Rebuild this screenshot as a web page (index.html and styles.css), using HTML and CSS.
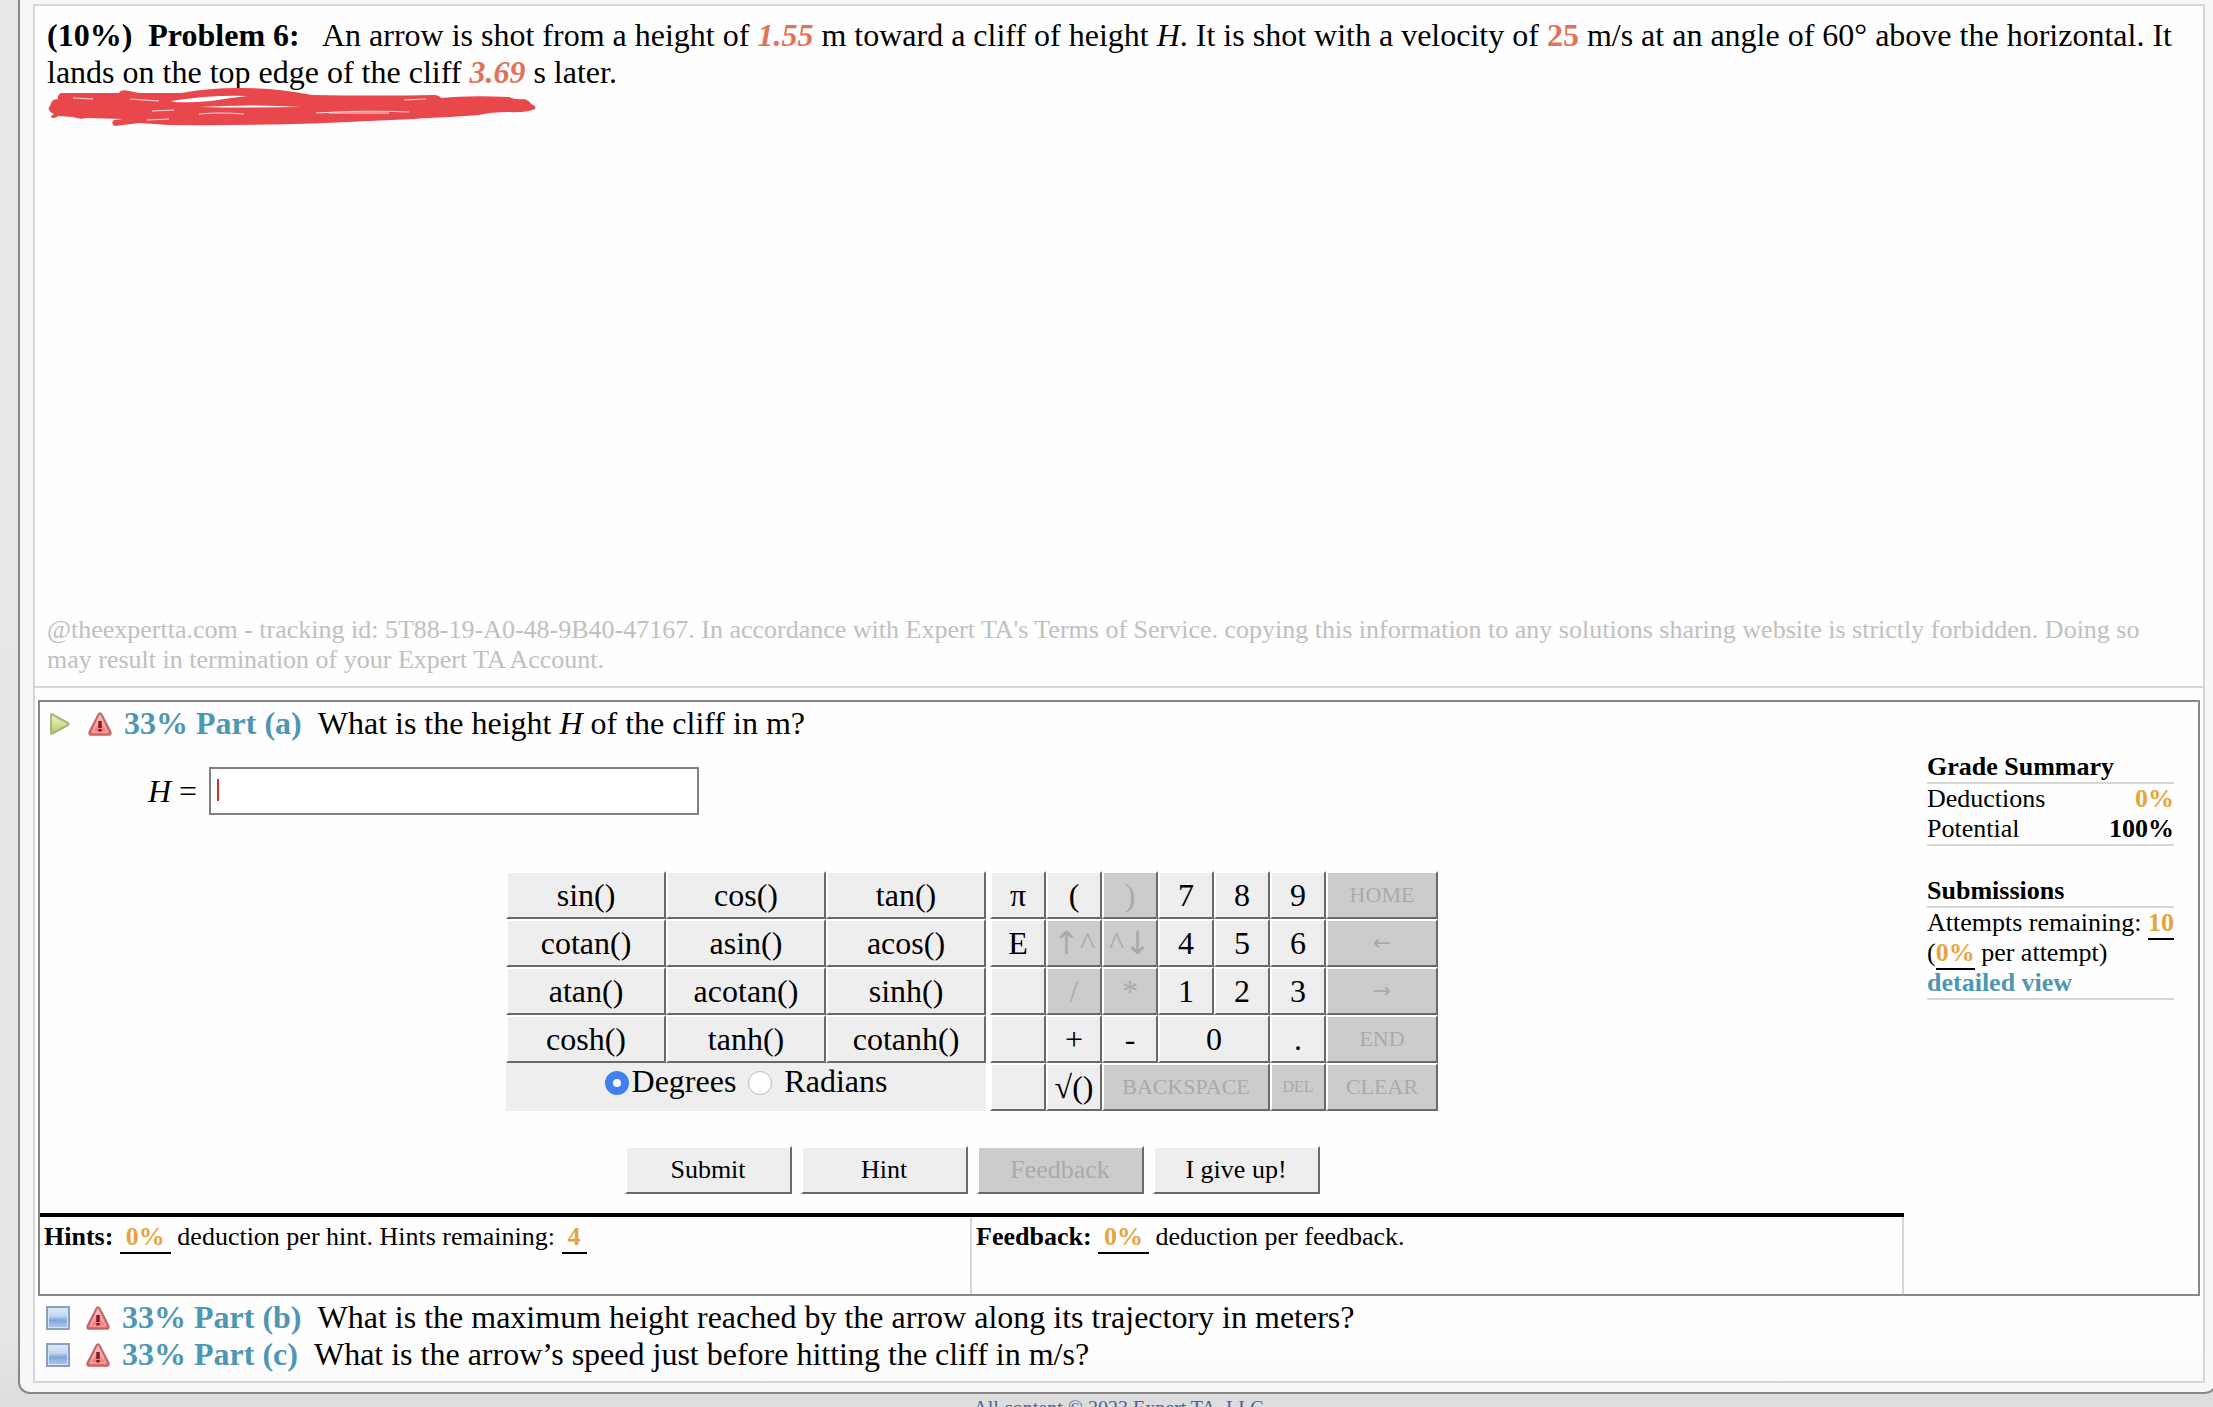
FILE: index.html
```html
<!DOCTYPE html>
<html lang="en">
  <head>
    <meta charset="UTF-8">
    <title>Problem 6</title>
    <link rel="stylesheet" href="styles.css">
  </head>
  <body>
    <!-- Shared icons -->
    <svg class="defs" width="0" height="0" aria-hidden="true">
      <defs>
        <linearGradient id="red" x1="0" y1="0" x2="0" y2="1">
          <stop offset="0" stop-color="#f6c4c4"/>
          <stop offset="1" stop-color="#f26a6a"/>
        </linearGradient>
        <linearGradient id="green" x1="0" y1="0" x2="0" y2="1">
          <stop offset="0" stop-color="#eef6cf"/>
          <stop offset="1" stop-color="#aed05a"/>
        </linearGradient>
        <linearGradient id="blue" x1="0" y1="0" x2="0" y2="1">
          <stop offset="0" stop-color="#dfeaf8"/>
          <stop offset="0.4" stop-color="#c4d8f0"/>
          <stop offset="0.6" stop-color="#7fa6dc"/>
          <stop offset="1" stop-color="#b4cff0"/>
        </linearGradient>
        <symbol id="warn" viewBox="0 0 24 24">
          <path d="M10.5 2.5 Q12 0 13.5 2.5 L22.5 20 Q23.3 22.8 21 22.8 L3 22.8 Q0.7 22.8 1.5 20 Z" fill="url(#red)" stroke="#c0656a" stroke-width="2" stroke-linejoin="round"/>
          <path d="M12 5 L4.5 20 L19.5 20 Z" fill="none" stroke="#f7b9b9" stroke-width="1"/>
          <path d="M10.3 9 H13.7 V16 H10.3 Z M10.3 17 H13.7 V19.5 H10.3 Z" fill="#7c1d22"/>
        </symbol>
        <symbol id="play" viewBox="0 0 24 24">
          <path d="M3 3 Q3 1.5 4.5 2.5 L20 11 Q21.5 12 20 13 L4.5 21.5 Q3 22.5 3 21 Z" fill="url(#green)" stroke="#a5b77c" stroke-width="2" stroke-linejoin="round"/>
        </symbol>
        <symbol id="square" viewBox="0 0 24 24">
          <rect x="1" y="1" width="22" height="22" fill="url(#blue)" stroke="#8b9fc0" stroke-width="2"/>
          <rect x="2.5" y="2.5" width="19" height="19" fill="none" stroke="#d5e3f5" stroke-width="1"/>
        </symbol>
      </defs>
    </svg>

    <div id="page">
      <div id="content">
        <!-- Section 1: Problem statement -->
        <div id="statement">
          <p class="problem"><b>(10%)&nbsp; Problem 6:</b> &nbsp; An arrow is shot from a height of <i class="value">1.55</i> m toward a cliff of height <i>H</i>. It is shot with a velocity of <b class="value">25</b> m/s at an angle of 60° above the horizontal. It lands on the top edge of the cliff <i class="value">3.69</i> s later.</p>
          <svg class="scribble" viewBox="0 0 510 60" aria-hidden="true">
            <path d="M22 17 L80 17 Q82 13 90 15 L100 17 L142 17 Q170 12 200 12 Q238 12 273 19 Q340 20 396 19 Q401 20 402 22 Q430 19 470 21 Q476 24 485 23 Q491 25 492 28 Q498 30 496 33 Q486 37 470 36 Q452 36 440 39 Q400 42 330 45 Q240 50 130 49 L100 47 L76 50 Q71 48 75 44 L84 43 L47 42 Q42 44 34 41 L20 40 Q12 44 12 40 L15 38 Q7 34 11 30 L13 25 Q15 23 19 23 Q18 19 22 17 Z" fill="#e8474b"/>
            <path d="M132 25 Q170 19 208 20 Q190 22 172 25 Q150 27 135 26 Z M160 31 Q210 28 262 31 Q215 32 160 31 Z" fill="#fff"/>
            <path d="M34 22 L54 23 M91 23 Q105 24 120 25 M113 35 L135 34 M160 38 Q180 36 205 38 M277 37 Q330 34 370 36 M290 37 L350 37 M365 24 L387 23 M380 43 L400 42 M108 44 L130 43" fill="none" stroke="#fbe0e0" stroke-width="1"/>
          </svg>
          <p class="tracking">@theexpertta.com - tracking id: 5T88-19-A0-48-9B40-47167. In accordance with Expert TA's Terms of Service. copying this information to any solutions sharing website is strictly forbidden. Doing so may result in termination of your Expert TA Account.</p>
        </div>

        <!-- Section 2: Part (a) -->
        <div id="partA">
          <div class="work">
            <div class="part">
              <svg class="icon"><use href="#play"/></svg>
              <svg class="icon"><use href="#warn"/></svg>
              <b class="partName">33% Part (a)</b>
              <span>What is the height <i>H</i> of the cliff in m?</span>
            </div>
            <div class="answer">
              <label for="answer"><i>H</i> =</label>
              <div class="answerBox">
                <input id="answer" type="text">
                <span class="caret"></span>
              </div>
            </div>

            <div class="pads">
              <div class="functions">
                <button>sin()</button><button>cos()</button><button>tan()</button>
                <button>cotan()</button><button>asin()</button><button>acos()</button>
                <button>atan()</button><button>acotan()</button><button>sinh()</button>
                <button>cosh()</button><button>tanh()</button><button>cotanh()</button>
                <div class="units">
                  <input type="radio" name="units" id="deg" checked><label for="deg">Degrees</label>
                  <input type="radio" name="units" id="rad"><label class="rad" for="rad">Radians</label>
                </div>
              </div>
              <div class="keys">
                <button>π</button><button>(</button><button disabled>)</button>
                <button>7</button><button>8</button><button>9</button><button class="small" disabled>HOME</button>
                <button>E</button><button disabled><span class="arrow">↑</span>^</button><button disabled>^<span class="arrow">↓</span></button>
                <button>4</button><button>5</button><button>6</button><button class="small" disabled><span class="arrow">←</span></button>
                <button aria-label="blank"></button><button disabled>/</button><button disabled>*</button>
                <button>1</button><button>2</button><button>3</button><button class="small" disabled><span class="arrow">→</span></button>
                <button aria-label="blank"></button><button>+</button><button>-</button>
                <button class="two">0</button><button>.</button><button class="small" disabled>END</button>
                <button aria-label="blank"></button><button>√()</button>
                <button class="small three" disabled>BACKSPACE</button><button class="tiny" disabled>DEL</button><button class="small" disabled>CLEAR</button>
              </div>
            </div>

            <div class="actions">
              <button>Submit</button>
              <button>Hint</button>
              <button disabled>Feedback</button>
              <button>I give up!</button>
            </div>

            <div class="help">
              <div class="hints"><b>Hints:</b> <b class="blank">0%</b> deduction per hint. Hints remaining: <b class="blank">4</b></div>
              <div class="feedback"><b>Feedback:</b> <b class="blank">0%</b> deduction per feedback.</div>
            </div>
          </div>

          <!-- Grade summary column -->
          <div class="summary">
            <h2>Grade Summary</h2>
            <div class="rows">
              <div class="row"><span>Deductions</span><b class="orange">0%</b></div>
              <div class="row"><span>Potential</span><b>100%</b></div>
            </div>
            <h2>Submissions</h2>
            <div class="rows">
              <div class="row"><span>Attempts remaining:</span><b class="under">10</b></div>
              <div class="attempt">(<b class="under">0%</b> per attempt)</div>
              <a href="#">detailed view</a>
            </div>
          </div>
        </div>

        <!-- Section 3: Other parts -->
        <div class="others">
          <div class="part">
            <svg class="icon"><use href="#square"/></svg>
            <svg class="icon"><use href="#warn"/></svg>
            <b class="partName">33% Part (b)</b>
            <span>What is the maximum height reached by the arrow along its trajectory in meters?</span>
          </div>
          <div class="part">
            <svg class="icon"><use href="#square"/></svg>
            <svg class="icon"><use href="#warn"/></svg>
            <b class="partName">33% Part (c)</b>
            <span>What is the arrow’s speed just before hitting the cliff in m/s?</span>
          </div>
        </div>
      </div>
    </div>
    <div id="footer">All content © 2023 Expert TA, LLC</div>
  </body>
</html>
```
FILE: styles.css
```css
* {
  box-sizing: border-box;
}
body {
  margin: 0;
  height: 100vh;
  overflow: hidden;
  font-family: "Liberation Serif", "Times New Roman", serif;
  font-size: 26px;
  line-height: 30px;
  color: #000;
  background: linear-gradient(#e8e8ea, #e6e6e6 95%, #dcdcdc);
}
p, h2 {
  margin: 0;
}
.defs {
  position: absolute;
}
#page {
  margin: 0 -4px 0 18px;
  padding: 4px 10px 9px 13px;
  border: 2px solid #888;
  border-top: 0;
  border-radius: 0 0 12px 12px;
  background: #f7f7f7;
}
#content {
  border: 2px solid #d6d6d6;
  background: linear-gradient(#fefefe 97%, #fafafa);
}

/* problem statement */
#statement {
  position: relative;
  display: flex;
  flex-direction: column;
  justify-content: space-between;
  min-height: 682px;
  padding: 11px 24px 11px 12px;
  border-bottom: 2px solid #d6d6d6;
}
.problem {
  font-size: 32px;
  line-height: 37px;
}
.value {
  color: #e2725b;
  font-weight: bold;
}
.tracking {
  color: #c0c0c0;
}
.scribble {
  position: absolute;
  left: 4px;
  top: 70px;
  width: 510px;
  height: 60px;
}

/* part (a) */
#partA {
  display: grid;
  grid-template-columns: 1fr 294px;
  margin: 12px 3px 0;
  border: 2px solid #888;
}
.part {
  display: flex;
  align-items: center;
  padding-left: 8px;
  font-size: 32px;
  line-height: 37px;
}
.icon {
  width: 24px;
  height: 24px;
  margin-right: 16px;
}
.partName {
  margin-left: -4px;
  margin-right: 16px;
  color: #4e97b3;
}
.work .part {
  padding-top: 3px;
}
.answer {
  display: flex;
  align-items: center;
  gap: 12px;
  margin-top: 25px;
  padding-left: 108px;
  font-size: 32px;
}
.answerBox {
  position: relative;
}
.answerBox input {
  display: block;
  width: 490px;
  height: 48px;
  padding: 0 10px;
  border: 2px solid #808080;
  background: #fff;
  font: inherit;
}
.caret {
  position: absolute;
  left: 8px;
  top: 12px;
  width: 2px;
  height: 22px;
  background: #d03030;
}

/* keypads */
button {
  padding: 0;
  border: 2px solid;
  border-color: #fff #6a6a6a #6a6a6a #fff;
  background: #eee;
  color: #000;
  font-family: inherit;
  font-size: 32px;
  line-height: 36px;
}
button:disabled {
  background: #ccc;
  color: #aaa;
}
.pads {
  display: flex;
  justify-content: center;
  gap: 4px;
  margin-top: 56px;
}
.functions, .keys {
  display: grid;
  grid-template-columns: repeat(3, 160px);
  grid-auto-rows: 48px;
}
.keys {
  grid-template-columns: repeat(6, 56px) 112px;
}
.keys .small {
  font-size: 22px;
}
.keys .tiny {
  font-size: 16px;
}
.arrow {
  font-family: "DejaVu Sans", sans-serif;
}
.two {
  grid-column: span 2;
}
.three {
  grid-column: span 3;
}
.units {
  grid-column: span 3;
  display: flex;
  justify-content: center;
  background: #eee;
  font-size: 32px;
  line-height: 36px;
}
.units input {
  appearance: none;
  width: 24px;
  height: 24px;
  margin: 8px 3px 0 0;
  border: 1px solid #bbb;
  border-radius: 50%;
  background: #fff;
}
.units input:checked {
  border: 8px solid #3f7ff0;
}
.units label {
  margin-right: 12px;
}
.units .rad {
  margin: 0 0 0 9px;
}
.actions {
  display: flex;
  justify-content: center;
  gap: 9px;
  margin-top: 35px;
}
.actions button {
  width: 167px;
  height: 48px;
  font-size: 26px;
}

/* hints and feedback */
.help {
  display: grid;
  grid-template-columns: 1fr 1fr;
  margin-top: 19px;
  border-top: 4px solid #000;
}
.help div {
  height: 77px;
  padding: 5px 4px;
  border-right: 2px solid #d6d6d6;
}
.blank {
  display: inline-block;
  padding: 0 6px;
  border-bottom: 2px solid #000;
  color: #e8a33d;
}

/* grade summary */
.summary {
  padding: 50px 24px 0 23px;
}
.summary h2 {
  font-size: 26px;
  line-height: 30px;
}
.rows {
  margin-bottom: 30px;
  border: 2px solid #d6d6d6;
  border-width: 2px 0;
}
.row {
  display: flex;
  justify-content: space-between;
  height: 30px;
}
.attempt {
  height: 30px;
}
.orange, .under {
  color: #e8a33d;
}
.under {
  display: inline-block;
  height: 32px;
  border-bottom: 2px solid #000;
}
.summary a {
  display: block;
  color: #4e97b3;
  font-weight: bold;
  text-decoration: none;
}

/* remaining parts */
.others {
  padding: 3px 3px 8px;
}
#footer {
  padding-left: 24px;
  text-align: center;
  color: #4a6596;
  font-size: 20px;
  line-height: 28px;
}
```
